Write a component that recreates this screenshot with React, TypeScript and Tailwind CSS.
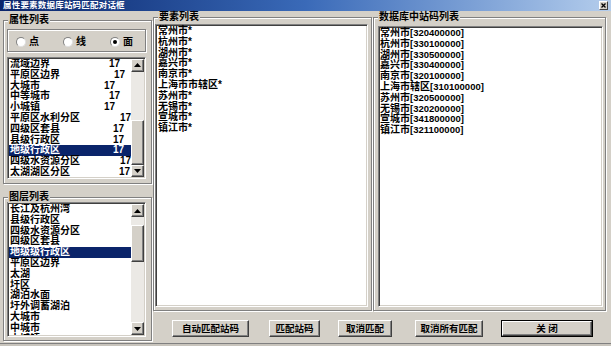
import React from 'react';

const attrItems = [
  { name: '流域边界', x: 99 },
  { name: '平原区边界', x: 104 },
  { name: '大城市', x: 94 },
  { name: '中等城市', x: 99 },
  { name: '小城镇', x: 94 },
  { name: '平原区水利分区', x: 113 },
  { name: '四级区套县', x: 103 },
  { name: '县级行政区', x: 103 },
  { name: '地级行政区', x: 103 },
  { name: '四级水资源分区', x: 113 },
  { name: '太湖湖区分区', x: 109 },
];

const layers = [
  '长江及杭州湾', '县级行政区', '四级水资源分区', '四级区套县', '地级级行政区', '平原区边界',
  '太湖', '圩区', '湖泊水面', '圩外调蓄湖泊', '大城市', '中城市', '小城镇',
];

const cities = ['常州市', '杭州市', '湖州市', '嘉兴市', '南京市', '上海市市辖区', '苏州市', '无锡市', '宣城市', '镇江市'];

const codes = [
  ['常州市', '320400000'], ['杭州市', '330100000'], ['湖州市', '330500000'], ['嘉兴市', '330400000'],
  ['南京市', '320100000'], ['上海市辖区', '310100000'], ['苏州市', '320500000'], ['无锡市', '320200000'],
  ['宣城市', '341800000'], ['镇江市', '321100000'],
];

function Group({ label, className, children }: { label: string; className: string; children: React.ReactNode }) {
  return (
    <div className={`relative border border-[#808080] shadow-[inset_1px_1px_0_#fff,1px_1px_0_#fff] ${className}`}>
      <span className="absolute -top-[7px] left-[4px] bg-[#d4d0c8] px-[1px] text-[10px] font-bold leading-[12px]">{label}</span>
      {children}
    </div>
  );
}

function Arrow({ up }: { up?: boolean }) {
  return (
    <div className="h-[13px] flex items-center justify-center bg-[#d4d0c8] border border-t-white border-l-white border-r-[#404040] border-b-[#404040] shadow-[inset_-1px_-1px_0_#808080]">
      <svg width="7" height="4" viewBox="0 0 7 4">
        {up ? <path d="M3.5 0L7 4H0z" fill="#000" /> : <path d="M0 0h7L3.5 4z" fill="#000" />}
      </svg>
    </div>
  );
}

function Scrollbar({ gap, thumb }: { gap: number; thumb: number }) {
  return (
    <div className="w-[13px] flex flex-col shrink-0">
      <Arrow up />
      <div className="flex-1 bg-[#ebe9e5]">
        <div style={{ height: gap }} />
        <div
          style={{ height: thumb }}
          className="bg-[#d4d0c8] border border-t-white border-l-white border-r-[#404040] border-b-[#404040] shadow-[inset_-1px_-1px_0_#808080]"
        />
      </div>
      <Arrow />
    </div>
  );
}

function ListBox({ className, children }: { className: string; children: React.ReactNode }) {
  return (
    <div className={`flex bg-white p-[1px] border border-t-[#808080] border-l-[#808080] border-r-white border-b-white shadow-[inset_1px_1px_0_#404040,inset_-1px_-1px_0_#d4d0c8] ${className}`}>
      {children}
    </div>
  );
}

function Radio({ label, checked, className }: { label: string; checked?: boolean; className: string }) {
  return (
    <div className={`flex items-center ${className}`}>
      <span className="w-[10px] h-[10px] rounded-full bg-white border border-t-[#808080] border-l-[#808080] border-r-[#e0e0e0] border-b-[#e0e0e0] flex items-center justify-center">
        {checked && <span className="w-[4px] h-[4px] rounded-full bg-black" />}
      </span>
      <span className="ml-[3px] text-[10px] font-bold leading-[12px]">{label}</span>
    </div>
  );
}

function Button({ label, className, isDefault }: { label: string; className: string; isDefault?: boolean }) {
  return (
    <div className={`h-[17px] ${isDefault ? 'border border-black' : ''} ${className}`}>
      <div className="h-full flex items-center justify-center bg-[#d4d0c8] border border-t-white border-l-white border-r-[#404040] border-b-[#404040] shadow-[inset_-1px_-1px_0_#808080] text-[9.5px] font-bold leading-[11px]">
        {label}
      </div>
    </div>
  );
}

export default function App() {
  return (
    <div className="w-[611px] h-[346px] bg-[#d4d0c8] flex flex-col overflow-hidden text-black font-['Liberation_Sans','Noto_Sans_CJK_SC',sans-serif]">
      <div className="h-[11px] flex items-center bg-gradient-to-r from-[#0a246a] via-[#3a6ab8] to-[#b4cdec] shrink-0">
        <span className="pl-[3px] text-[8.5px] font-bold leading-[11px] text-white tracking-[0.2px]">属性要素数据库站码匹配对话框</span>
        <div className="ml-auto mr-[3px] w-[9px] h-[9px] bg-[#d4d0c8] border border-t-white border-l-white border-r-[#404040] border-b-[#404040] flex items-center justify-center">
          <svg width="5" height="5" viewBox="0 0 5 5">
            <path d="M0.5 0.5L4.5 4.5M4.5 0.5L0.5 4.5" stroke="#000" strokeWidth="1.3" />
          </svg>
        </div>
      </div>

      <div className="flex pl-[3px] pt-[6px]">
        {/* left column */}
        <div className="w-[149px] flex flex-col">
          <Group label="属性列表" className="mt-[3px] h-[164px] pt-[8px] px-[3px]">
            <div className="h-[23px] w-[139px] border border-[#808080] shadow-[inset_1px_1px_0_#fff,1px_1px_0_#fff] flex items-center pt-[2px] pl-[8px]">
              <Radio label="点" className="" />
              <Radio label="线" className="ml-[24px]" />
              <Radio label="面" checked className="ml-[24px]" />
            </div>
            <ListBox className="mt-[5px] h-[122px] w-[139px]">
              <div className="flex-1 overflow-hidden">
                {attrItems.map((it, i) => (
                  <div
                    key={i}
                    className={`h-[10.8px] flex items-center text-[10px] font-bold leading-[10.8px] pl-[1px] ${i === 8 ? 'bg-[#0a246a] text-white' : ''}`}
                  >
                    <span className="whitespace-nowrap" style={{ width: it.x }}>{it.name}</span>
                    <span>17</span>
                  </div>
                ))}
              </div>
              <Scrollbar gap={48} thumb={45} />
            </ListBox>
          </Group>

          <Group label="图层列表" className="mt-[13px] h-[144px] pt-[4px] px-[3px]">
            <ListBox className="h-[135px] w-[139px]">
              <div className="flex-1 overflow-hidden">
                {layers.map((name, i) => (
                  <div
                    key={i}
                    className={`h-[10.8px] text-[10px] font-bold leading-[10.8px] pl-[1px] whitespace-nowrap ${i === 4 ? 'bg-[#0a246a] text-white' : ''}`}
                  >
                    {name}
                  </div>
                ))}
              </div>
              <Scrollbar gap={8} thumb={37} />
            </ListBox>
          </Group>
        </div>

        {/* middle + right */}
        <div className="ml-[1px] flex flex-col">
          <div className="flex">
            <Group label="要素列表" className="w-[219px] h-[294px] pt-[6px] px-[1px]">
              <ListBox className="h-[283px] w-[213px]">
                <div className="flex-1 pl-[1px]">
                  {cities.map((c, i) => (
                    <div key={i} className="h-[10.8px] text-[10px] font-bold leading-[10.8px] whitespace-nowrap">
                      {c}*
                    </div>
                  ))}
                </div>
              </ListBox>
            </Group>
            <Group label="数据库中站码列表" className="ml-[1px] w-[233px] h-[294px] pt-[8px] pl-[4px]">
              <ListBox className="h-[281px] w-[225px]">
                <div className="flex-1">
                  {codes.map(([c, n], i) => (
                    <div key={i} className="h-[10.8px] text-[10px] font-bold leading-[10.8px] whitespace-nowrap">
                      {c}
                      <span className="text-[9.5px]">[{n}]</span>
                    </div>
                  ))}
                </div>
              </ListBox>
            </Group>
          </div>
          <div className="flex mt-[9px] pl-[19px]">
            <Button label="自动匹配站码" className="w-[77px]" />
            <Button label="匹配站码" className="ml-[20px] w-[51px]" />
            <Button label="取消匹配" className="ml-[18px] w-[54px]" />
            <Button label="取消所有匹配" className="ml-[23px] w-[68px]" />
            <Button label="关 闭" isDefault className="ml-[18px] w-[92px]" />
          </div>
        </div>
      </div>

      <div className="mt-auto h-[3px] border-t border-[#808080] bg-[#c8c4bc]" />
    </div>
  );
}
